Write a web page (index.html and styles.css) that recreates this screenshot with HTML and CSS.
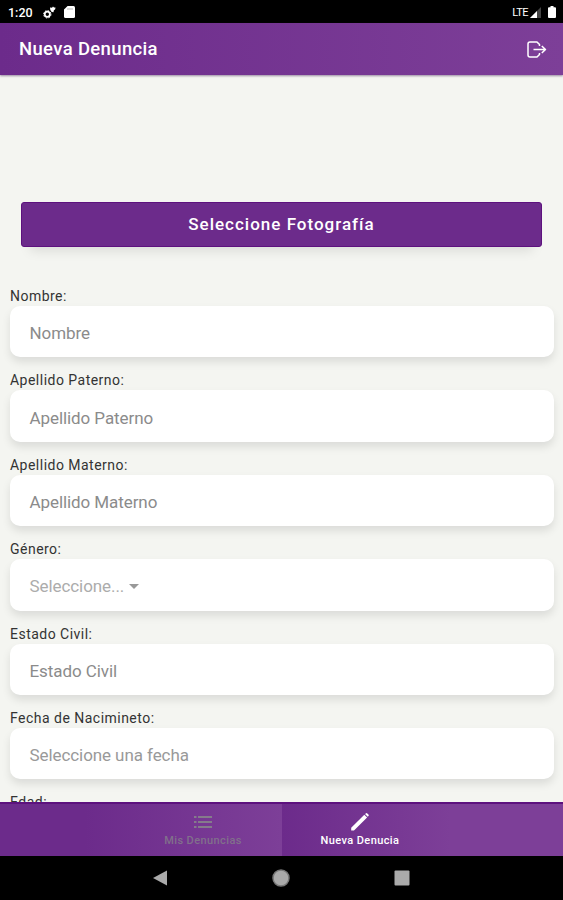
FILE: index.html
```html
<!DOCTYPE html>
<html lang="es">
<head>
    <meta charset="utf-8">
    <title>Nueva Denuncia</title>
    <link rel="stylesheet" href="styles.css">
</head>
<body>
<div class="screen">
    <div class="status">
        <span class="clock">1:20</span>
        <svg class="gears" width="13" height="13" viewBox="0 0 13 13">
            <circle cx="4.3" cy="8.3" r="2.6" fill="none" stroke="#fff" stroke-width="1.8"/>
            <circle cx="4.3" cy="8.3" r="3.7" fill="none" stroke="#fff" stroke-width="1" stroke-dasharray="1.5 1.4"/>
            <path d="M7 1.5l2 .3L10 .6l1 1 1.5-.2-.3 1.8-1.4 1.3-.3 1.8-1.8-.4L7.3 4z" fill="#fff"/>
        </svg>
        <svg class="card" width="11" height="12" viewBox="0 0 11 12"><path d="M3.6 0H9.5Q11 0 11 1.500V10.500Q11 12 9.500 12H1.500Q0 12 0 10.500V3.600Z" fill="#fff"/><path d="M4 2v2M6 2v2M8 2v2" stroke="#999" stroke-width=".7"/></svg>
        <span class="lte">LTE</span>
        <svg width="11" height="11" viewBox="0 0 11 11"><path d="M11 0V11H0Z" fill="#444"/><path d="M7 4V11H0Z" fill="#fff"/></svg>
        <svg class="battery" width="8" height="12" viewBox="0 0 8 12"><path d="M2.500 0h3v1.300H7Q8 1.300 8 2.300V11Q8 12 7 12H1Q0 12 0 11V2.300Q0 1.300 1 1.300H2.500Z" fill="#fff"/></svg>
    </div>
    <div class="header">
        <h1>Nueva Denuncia</h1>
        <svg width="20" height="17" viewBox="0 0 20 17" fill="none" stroke="#fff" stroke-width="1.500" stroke-linejoin="round"><path d="M12.500 5V3.500L10 1H3Q1 1 1 3v11q0 2 2 2h7l2.500-2.500V12M6.500 8.500H18.500M14.800 5l3.700 3.500-3.700 3.500"/></svg>
    </div>
    <div class="content">
        <button class="photo">Seleccione Fotografía</button>
        <div class="field"><label>Nombre:</label><div class="input">Nombre</div></div>
        <div class="field"><label>Apellido Paterno:</label><div class="input">Apellido Paterno</div></div>
        <div class="field"><label>Apellido Materno:</label><div class="input">Apellido Materno</div></div>
        <div class="field"><label>Género:</label><div class="input select">Seleccione...<span class="caret"></span></div></div>
        <div class="field"><label>Estado Civil:</label><div class="input">Estado Civil</div></div>
        <div class="field"><label>Fecha de Nacimineto:</label><div class="input date">Seleccione una fecha</div></div>
        <div class="field"><label>Edad:</label><div class="input">Edad</div></div>
    </div>
    <div class="tabs">
        <div class="tab left">
            <svg width="18" height="18" viewBox="0 0 18 18" fill="#857b8b"><path d="M0 3h2.500v2H0zM4 3h14v2H4zM0 8h2.500v2H0zM4 8h14v2H4zM0 13h2.500v2H0zM4 13h14v2H4z"/></svg>
            <span>Mis Denuncias</span>
        </div>
        <div class="tab right active">
            <svg width="18" height="18" viewBox="0 0 18 18" fill="#fff"><path d="M.2 17.600V14.800L13.300 1.800l2.800 2.700L3 17.600zM14 1.100l.8-.7q.8-.6 1.500 0l1.100 1.100q.7.700 0 1.500l-.6.800z"/></svg>
            <span>Nueva Denucia</span>
        </div>
    </div>
    <div class="navbar">
        <svg width="15" height="16" viewBox="0 0 15 16"><path d="M0 8L14 .5v15z" fill="#aaa"/></svg>
        <svg width="18" height="18" viewBox="0 0 18 18"><circle cx="9" cy="9" r="8" fill="#aaa" stroke="#777" stroke-width="1.500"/></svg>
        <svg width="16" height="16" viewBox="0 0 16 16"><rect x=".5" y=".5" width="15" height="15" rx="1" fill="#aaa"/></svg>
    </div>
</div>
</body>
</html>
```
FILE: styles.css
```css
body { margin: 0; font-family: Roboto, "Liberation Sans", sans-serif; }
.screen { display: flex; flex-direction: column; height: 900px; overflow: hidden; background: #f4f5f1; }
.status { display: flex; align-items: center; flex: none; box-sizing: border-box; height: 23px; padding: 1px 7px 0 8px; background: #000; color: #fff; }
.clock { width: 35px; font-size: 12.5px; font-weight: 500; }
.card { margin-left: 8px; }
.lte { margin-left: auto; margin-right: 2px; font-size: 11px; letter-spacing: -0.5px; }
.battery { margin-left: 7px; }
.header { display: flex; align-items: center; justify-content: space-between; flex: none; box-sizing: border-box; height: 52px; padding: 0 16px 0 19px; background: linear-gradient(90deg, #6c2b8b, #7d3f98); color: #fff; box-shadow: 0 1px 2px rgba(60, 30, 80, 0.5); }
.header h1 { margin: 0; font-size: 18.5px; font-weight: 500; letter-spacing: 0.35px; }
.content { flex: 1; min-height: 0; overflow: hidden; padding: 127px 9px 0 10px; }
.photo { display: block; box-sizing: border-box; width: 521px; height: 45px; margin: 0 0 41px 11px; padding: 0 0 2px; border: 1px solid #5d117e; border-radius: 3px; background: #6c2b8b; color: #fff; font-family: inherit; font-size: 17px; font-weight: 500; letter-spacing: 1px; box-shadow: 0 13px 12px -9px rgba(0, 0, 0, 0.1); }
.field { margin-bottom: 15px; }
.field label { display: block; height: 18px; line-height: 17px; font-size: 14px; letter-spacing: 0.48px; color: #333; }
.input { display: flex; align-items: center; box-sizing: border-box; height: 51.4px; padding: 3px 20px 0 19.5px; border-radius: 10px; background: #fff; color: #8b8b8b; font-size: 17px; letter-spacing: -0.08px; box-shadow: 0 5px 8px rgba(0, 0, 0, 0.1); }
.select { color: #acacac; }
.date { color: #999; }
.caret { margin-left: 5px; border: 5px solid transparent; border-top-color: #999; border-bottom: 0; }
.tabs { display: flex; flex: none; box-sizing: border-box; height: 54px; border-top: 2px solid #5d117e; }
.tab { display: flex; flex-direction: column; align-items: center; box-sizing: border-box; padding-top: 9px; font-size: 11px; font-weight: 500; letter-spacing: 0.4px; }
.tab span { margin-top: 3px; line-height: 13px; }
.left { width: 282px; padding-left: 124px; background: linear-gradient(90deg, #6c2b8b 30%, #7d3f98); color: #81708b; }
.right { width: 281px; padding-right: 125px; background: linear-gradient(90deg, #6c2b8b, #7d3f98 60%); }
.active { color: #fff; }
.navbar { display: flex; align-items: center; justify-content: center; gap: 104px; flex: none; height: 44px; background: #000; }
```
